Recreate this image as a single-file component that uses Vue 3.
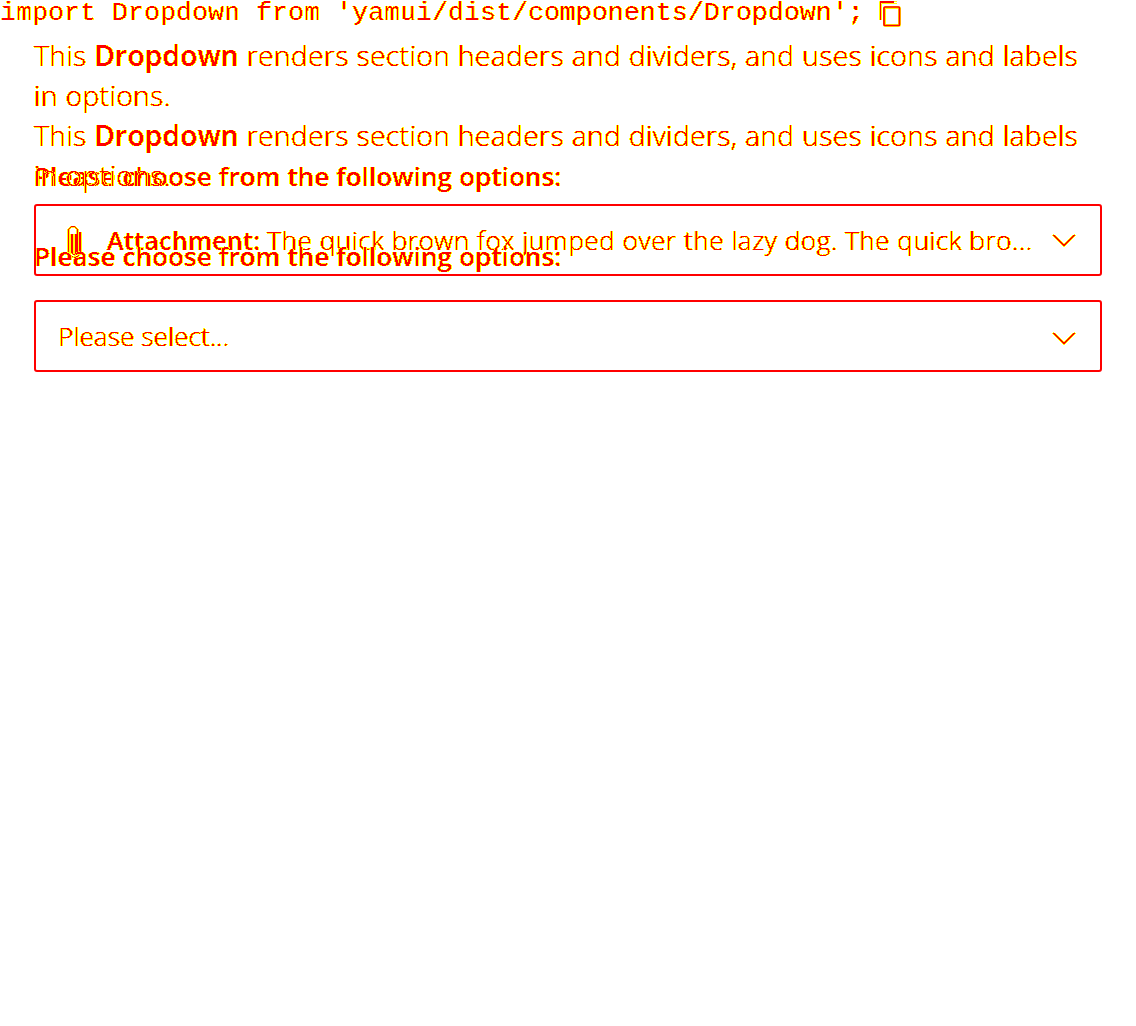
<script setup>
const intro = ['This', 'Dropdown', 'renders section headers and dividers, and uses icons and labels']
const examples = [
  {
    id: 'first',
    label: 'Please choose from the following options:',
    strong: 'Attachment:',
    value: 'The quick brown fox jumped over the lazy dog. The quick bro...',
    icon: true,
  },
  {
    id: 'second',
    label: 'Please choose from the following options:',
    value: 'Please select...',
    icon: false,
  },
]
</script>

<template>
  <div class="page">
    <svg class="defs" width="0" height="0" aria-hidden="true">
      <filter id="edge" x="-5%" y="-5%" width="110%" height="110%" color-interpolation-filters="sRGB">
        <feComponentTransfer in="SourceAlpha" result="wide">
          <feFuncA type="linear" slope="60" intercept="-3" />
        </feComponentTransfer>
        <feComponentTransfer in="SourceAlpha" result="core">
          <feFuncA type="linear" slope="60" intercept="-28" />
        </feComponentTransfer>
        <feMorphology in="core" operator="dilate" radius="1 0" result="sides" />
        <feMerge result="halo">
          <feMergeNode in="wide" />
          <feMergeNode in="sides" />
        </feMerge>
        <feFlood flood-color="#ff0" />
        <feComposite in2="halo" operator="in" result="fringe" />
        <feFlood flood-color="#f00" />
        <feComposite in2="core" operator="in" result="ink" />
        <feMerge>
          <feMergeNode in="fringe" />
          <feMergeNode in="ink" />
        </feMerge>
      </filter>
    </svg>
    <header class="import">
      <code>import Dropdown from 'yamui/dist/components/Dropdown';</code>
      <svg class="copy" width="26" height="28" viewBox="0 0 26 28" fill="none">
        <path stroke="#ff0" d="M2.500 20V1.500H20M4.500 20V3.500H20" />
        <path stroke="#f00" stroke-width="1" d="M3.500 20V2" />
        <path stroke="#f00" stroke-width="2" d="M3 2H17" />
        <rect x="7.500" y="7.500" width="15" height="18" rx="1" stroke="#ff0" stroke-width="3" />
        <rect x="7" y="7" width="15.500" height="18.500" rx="1" stroke="#f00" stroke-width="1.700" />
      </svg>
    </header>
    <main class="stage">
      <section v-for="ex in examples" :key="ex.id" class="example" :class="ex.id">
        <p class="intro">
          <span>{{ intro[0] }}</span>&#32;<b>{{ intro[1] }}</b>&#32;<span>{{ intro[2] }}</span><br />
          <span>in options.</span>
        </p>
        <div class="label">{{ ex.label }}</div>
        <div class="box">
          <svg v-if="ex.icon" class="clip" width="16" height="34" viewBox="0 0 16 34" fill="none" stroke="#f00">
            <path stroke-width="1" d="M1.500 26V6C1.500 0 10.500 0 10.500 6V26C10.500 31 5 31 5 26V9M13.500 8V27C13.500 34 1.500 34 1.500 26" />
            <path stroke-width="2" d="M5 9V28M9 9V28M13 7V26" />
          </svg>
          <div class="value"><b v-if="ex.strong">{{ ex.strong }}</b><span>{{ ex.value }}</span></div>
          <svg class="chevron" width="24" height="16" viewBox="0 0 24 16" fill="none" stroke="#f00" stroke-width="1.500">
            <path d="M1 2L12 12.500L23 2" />
          </svg>
        </div>
      </section>
    </main>
  </div>
</template>

<style>
body {
  margin: 0;
  background: #fff;
}
</style>

<style scoped>
.page {
  height: 1026px;
  overflow: hidden;
  color: #f00;
  font-family: "Open Sans", "Noto Sans", sans-serif;
}
.defs {
  display: block;
}
.import {
  display: flex;
  height: 35px;
}
code,
.intro,
.label,
.value,
.clip,
.chevron {
  filter: url(#edge);
}
code {
  width: 864px;
  color: rgb(255 0 0 / 0.68);
  font: 26.667px/26px "Liberation Mono", monospace;
  white-space: nowrap;
}
.copy {
  margin-left: 13px;
}
.stage {
  display: grid;
}
.example {
  grid-area: 1 / 1;
  margin: 0 34px;
}
.second {
  padding-top: 80px;
}
.intro {
  margin: 0;
  font-size: 28px;
  font-weight: 300;
  letter-spacing: 0.47px;
  line-height: 40px;
  white-space: nowrap;
}
b {
  font-weight: 600;
  color: rgb(255 0 0 / 0.72);
}
.intro b {
  letter-spacing: 0.3px;
}
.label {
  margin-top: 41px;
  color: rgb(255 0 0 / 0.72);
  line-height: 40px;
  font-weight: 600;
  font-size: 26px;
  letter-spacing: 0.1px;
  white-space: nowrap;
}
.box {
  box-sizing: border-box;
  display: flex;
  align-items: center;
  height: 72px;
  margin-top: 8px;
  padding: 0 24px 0 22px;
  border: 2px solid #f00;
  border-radius: 3px;
}
.second .box {
  margin-top: 24px;
}
.clip {
  margin: 4px 24px 0 9px;
}
.value {
  flex: 1;
  font-size: 26px;
  font-weight: 300;
  line-height: 40px;
  white-space: nowrap;
}
.first .value {
  letter-spacing: 0.6px;
}
.second .value {
  letter-spacing: 0.15px;
}
.value b {
  margin-right: 7px;
  font-size: 25px;
  letter-spacing: 0.3px;
}
.chevron {
  margin-top: 1px;
}
.second .chevron {
  margin-top: 5px;
}
</style>
